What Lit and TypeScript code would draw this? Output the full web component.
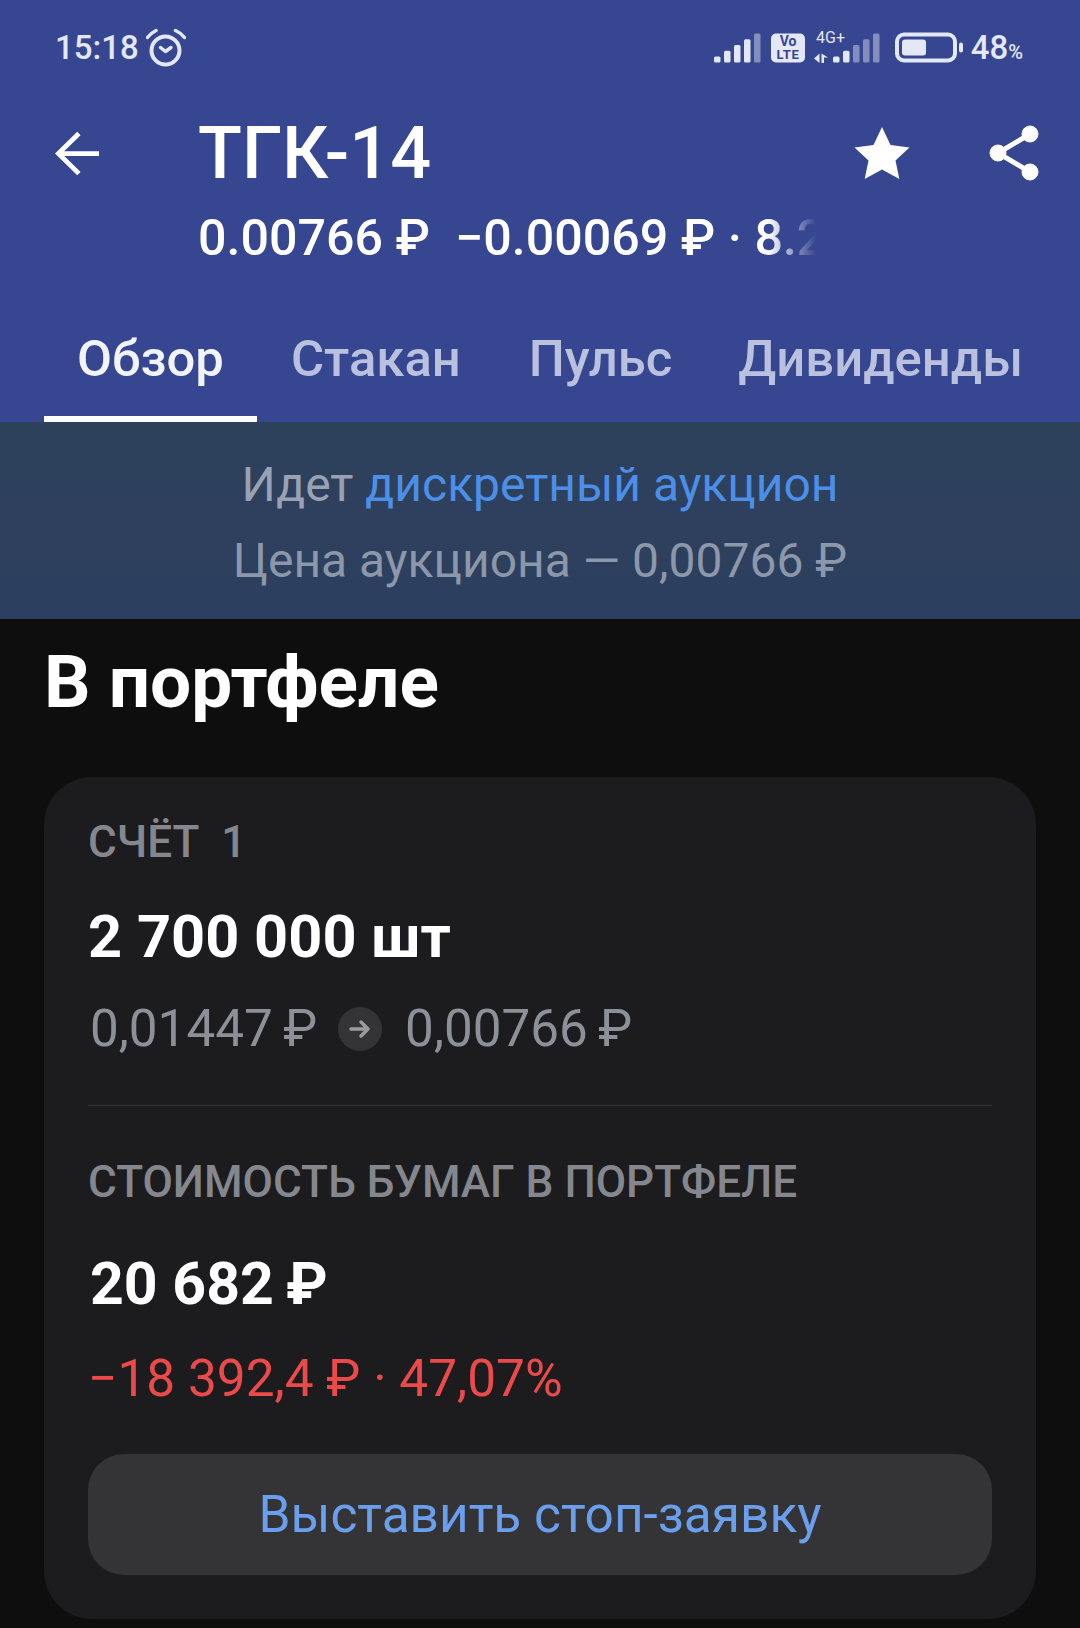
import { LitElement, html, css, svg } from "lit"
import { customElement } from "lit/decorators.js"

const bars = (x0: number, active: number) =>
  [0, 1, 2, 3, 4].map((i) => {
    const h = 6 + i * 5.75
    return svg`<rect x=${x0 + i * 10} y=${34.5 - h} width="6.5" height=${h} rx="1.500" fill="#e3e7f6" opacity=${i < active ? 1 : 0.45}></rect>`
  })

@customElement("app-root")
export class AppRoot extends LitElement {
  static styles = css`
    :host {
      display: block;
      width: 1080px;
      height: 1628px;
      overflow: hidden;
      background: #0e0e0f;
      font-family: Roboto, "Liberation Sans", sans-serif;
    }

    .header {
      background: #374691;
      height: 422px;
      box-sizing: border-box;
      display: flex;
      flex-direction: column;
    }

    .status {
      height: 92px;
      box-sizing: border-box;
      padding: 3px 57px 0 55px;
      display: flex;
      align-items: center;
      justify-content: space-between;
      color: #e3e7f6;
    }

    .status-left,
    .status-right {
      display: flex;
      align-items: center;
    }

    .time {
      font-size: 33px;
      font-weight: 500;
    }

    .alarm {
      margin-left: 7px;
    }

    .pct {
      font-size: 33px;
      font-weight: 500;
      margin-left: 5px;
    }

    .pct small {
      font-size: 20px;
    }

    .toolbar {
      height: 200px;
      position: relative;
      display: flex;
    }

    .back {
      width: 198px;
      padding: 40px 0 0 55px;
      box-sizing: border-box;
    }

    .titles {
      flex: 1;
      min-width: 0;
    }

    .title {
      color: #fff;
      font-size: 72px;
      font-weight: 500;
      line-height: 86px;
      margin-top: 19px;
    }

    .price {
      color: #fff;
      font-size: 50.2px;
      font-weight: 500;
      line-height: 60px;
      margin-top: 11px;
      width: 618px;
      white-space: pre;
      overflow: hidden;
      -webkit-mask-image: linear-gradient(90deg, #000 570px, transparent 618px);
      mask-image: linear-gradient(90deg, #000 570px, transparent 618px);
    }

    .actions {
      position: absolute;
      top: 33px;
      right: 39px;
      display: flex;
      gap: 79px;
      align-items: center;
    }

    .tabs {
      flex: 1;
      display: flex;
      padding: 0 44px;
      font-size: 50.8px;
      font-weight: 500;
      color: #b9c1de;
    }

    .tab {
      padding: 2px 34px 0 34px;
      display: flex;
      align-items: center;
      box-sizing: border-box;
      height: 130px;
      white-space: nowrap;
    }

    .tab:last-child {
      padding-left: 32px;
    }

    .tab.active {
      color: #f2f4fb;
      border-bottom: 6px solid #fff;
      padding: 8px 33px 0;
    }

    .banner {
      height: 197px;
      box-sizing: border-box;
      padding-top: 4px;
      background: linear-gradient(180deg, #2e415b, #2d3f5f);
      display: flex;
      flex-direction: column;
      align-items: center;
      justify-content: center;
      gap: 18px;
      font-size: 48px;
      line-height: 58px;
      color: #8c97aa;
    }

    .banner .first {
      color: #98a2b4;
    }

    .banner a {
      color: #4c8fe8;
    }

    .section {
      margin: 23px 0 0 44px;
      font-size: 73px;
      font-weight: 700;
      line-height: 80px;
      color: #fff;
    }

    .card {
      margin: 55px 44px 0;
      height: 842px;
      box-sizing: border-box;
      background: #1c1c1e;
      border-radius: 48px;
      padding: 39px 44px 0;
    }

    .label {
      font-size: 44.1px;
      font-weight: 500;
      line-height: 52px;
      color: #85878e;
    }

    .qty {
      margin-top: 34px;
      font-size: 59.5px;
      font-weight: 700;
      line-height: 70px;
      color: #fff;
    }

    .prices {
      margin-top: 27px;
      display: flex;
      align-items: center;
      font-size: 51.2px;
      line-height: 60px;
      color: #8e9099;
      padding-left: 2px;
    }

    .arrow {
      width: 44px;
      height: 44px;
      border-radius: 50%;
      background: #343436;
      margin: 0 23px 0 21px;
      display: flex;
      align-items: center;
      justify-content: center;
    }

    hr {
      border: 0;
      height: 1px;
      background: #333336;
      margin: 46px 0 50px;
    }

    .total {
      margin-top: 41px;
      font-size: 59px;
      font-weight: 700;
      line-height: 70px;
      color: #fff;
      padding-left: 2px;
    }

    .loss {
      margin-top: 30px;
      font-size: 51.4px;
      line-height: 60px;
      color: #ec4a4a;
    }

    .button {
      margin-top: 45px;
      height: 121px;
      border-radius: 36px;
      background: #343436;
      color: #6a9fee;
      font-size: 51.4px;
      display: flex;
      align-items: center;
      justify-content: center;
    }
  `

  render() {
    return html`
      <div class="header">
        <div class="status">
          <div class="status-left">
            <span class="time">15:18</span>
            <svg class="alarm" width="40" height="40" viewBox="0 0 40 40" fill="none" stroke="#e3e7f6">
              <circle cx="19.500" cy="22.500" r="14" stroke-width="4"></circle>
              <path d="M14.500 19.500l5 4 5.500-4" stroke-width="3.500" stroke-linecap="round" stroke-linejoin="round"></path>
              <path d="M1.500 9.500Q5 5 10 2.500M29.500 2.500Q35 5 38.500 9.500" stroke-width="3.500" stroke-linecap="round"></path>
            </svg>
          </div>
          <div class="status-right">
            <svg width="252" height="40" viewBox="0 0 252 40">
              ${bars(0, 4)}
              <rect x="57" y="5.500" width="34" height="29" rx="5" fill="#e3e7f6"></rect>
              <text x="74" y="18" text-anchor="middle" font-size="14" font-weight="700" fill="#374691" font-family="Roboto">Vo</text>
              <text x="74" y="31" text-anchor="middle" font-size="13" font-weight="700" letter-spacing="0.6" fill="#374691" font-family="Roboto">LTE</text>
              <text x="102" y="15" font-size="16" fill="#e3e7f6" font-family="Roboto">4G+</text>
              <path d="M100 30.500l5.500-5v9.500zM107.500 25.500v9.500h2.500v-5.500h4z" fill="#e3e7f6"></path>
              ${bars(119, 2)}
              <rect x="183" y="6.500" width="58" height="26" rx="7" fill="none" stroke="#e3e7f6" stroke-width="4"></rect>
              <rect x="188" y="11.500" width="24" height="16" rx="3" fill="#e3e7f6"></rect>
              <rect x="245" y="14.500" width="4" height="10" rx="2" fill="#e3e7f6"></rect>
            </svg>
            <span class="pct">48<small>%</small></span>
          </div>
        </div>
        <div class="toolbar">
          <div class="back">
            <svg width="44" height="44" viewBox="0 0 46 46" fill="none" stroke="#fff" stroke-width="5">
              <path d="M46 22.500H3M25 1.500L3.500 22.500 25 43.500"></path>
            </svg>
          </div>
          <div class="titles">
            <div class="title">ТГК-14</div>
            <div class="price">0.00766 ₽  −0.00069 ₽ · 8.26%</div>
          </div>
          <div class="actions">
            <svg width="56" height="52" viewBox="0 0 56 52">
              <path d="M28 0l8.500 18 19 2.500-14 13 3.800 18.500L28 42.500 10.700 52l3.800-18.500-14-13 19-2.500z" fill="#fff"></path>
            </svg>
            <svg width="52" height="56" viewBox="0 0 52 56" fill="#fff" stroke="#fff">
              <path d="M41 9L9 28l32 19" fill="none" stroke-width="5"></path>
              <circle cx="41" cy="9" r="8"></circle>
              <circle cx="9" cy="28" r="8"></circle>
              <circle cx="41" cy="47" r="8"></circle>
            </svg>
          </div>
        </div>
        <div class="tabs">
          <div class="tab active">Обзор</div>
          <div class="tab">Стакан</div>
          <div class="tab">Пульс</div>
          <div class="tab">Дивиденды</div>
        </div>
      </div>
      <div class="banner">
        <div class="first">Идет <a>дискретный аукцион</a></div>
        <div>Цена аукциона — 0,00766 ₽</div>
      </div>
      <div class="section">В портфеле</div>
      <div class="card">
        <div class="label">СЧЁТ&nbsp; 1</div>
        <div class="qty">2 700 000 шт</div>
        <div class="prices">
          <span>0,01447&#8201;₽</span>
          <span class="arrow">
            <svg width="22" height="20" viewBox="0 0 22 20" fill="none" stroke="#9a9ba1" stroke-width="3.500" stroke-linecap="round" stroke-linejoin="round">
              <path d="M2 10h17M12 3l7 7-7 7"></path>
            </svg>
          </span>
          <span>0,00766&#8201;₽</span>
        </div>
        <hr />
        <div class="label">СТОИМОСТЬ БУМАГ В ПОРТФЕЛЕ</div>
        <div class="total">20 682&#8201;₽</div>
        <div class="loss">−18 392,4 ₽ · 47,07%</div>
        <div class="button">Выставить стоп-заявку</div>
      </div>
    `
  }
}
